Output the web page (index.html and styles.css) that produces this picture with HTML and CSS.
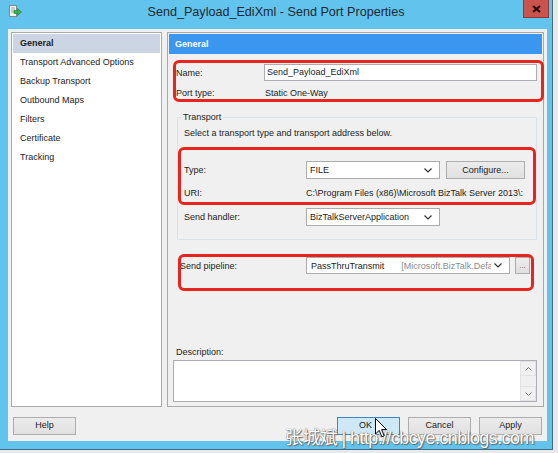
FILE: index.html
```html
<!DOCTYPE html>
<html>
<head>
<meta charset="utf-8">
<title>Send Port Properties</title>
<link rel="stylesheet" href="styles.css">
</head>
<body>
<div class="window">
  <div class="titlebar">
    <svg class="app-icon" width="14" height="13" viewBox="0 0 14 13">
      <rect x="1.5" y="0.5" width="7" height="11" fill="#f4f4f4" stroke="#7d8a96"/>
      <line x1="3" y1="3" x2="7" y2="3" stroke="#9aa6b2"/>
      <line x1="3" y1="5" x2="7" y2="5" stroke="#9aa6b2"/>
      <line x1="3" y1="7" x2="7" y2="7" stroke="#9aa6b2"/>
      <path d="M6 5.5 H9.5 V3.5 L13.5 7 L9.5 10.5 V8.5 H6 Z" fill="#37b34a" stroke="#1f7d2e" stroke-width="0.6"/>
    </svg>
    <div class="title">Send_Payload_EdiXml - Send Port Properties</div>
    <div class="close">
      <svg width="9" height="8" viewBox="0 0 9 8"><path d="M1 1 L8 7 M8 1 L1 7" stroke="#2a1010" stroke-width="2.2"/></svg>
    </div>
  </div>
  <div class="client">
    <div class="main">
      <ul class="nav">
        <li class="sel">General</li>
        <li>Transport Advanced Options</li>
        <li>Backup Transport</li>
        <li>Outbound Maps</li>
        <li>Filters</li>
        <li>Certificate</li>
        <li>Tracking</li>
      </ul>
      <div class="panel">
        <div class="panel-head">General</div>
        <div class="panel-body">
          <div class="row row-name">
            <span class="lbl">Name:</span>
            <div class="input">Send_Payload_EdiXml</div>
          </div>
          <div class="row row-port">
            <span class="lbl">Port type:</span>
            <span class="val">Static One-Way</span>
          </div>
          <fieldset class="transport">
            <legend>Transport</legend>
            <div class="hint">Select a transport type and transport address below.</div>
            <div class="row r-type">
              <span class="lbl2">Type:</span>
              <div class="combo c-type"><span class="ctext">FILE</span><svg class="chev" width="8" height="5" viewBox="0 0 8 5"><path d="M0.5 0.5 L4 4 L7.5 0.5" fill="none" stroke="#333" stroke-width="1.2"/></svg></div>
              <div class="btn configure">Configure...</div>
            </div>
            <div class="row r-uri">
              <span class="lbl2">URI:</span>
              <span class="uri">C:\Program Files (x86)\Microsoft BizTalk Server 2013\:</span>
            </div>
            <div class="row r-handler">
              <span class="lbl2">Send handler:</span>
              <div class="combo c-type"><span class="ctext">BizTalkServerApplication</span><svg class="chev" width="8" height="5" viewBox="0 0 8 5"><path d="M0.5 0.5 L4 4 L7.5 0.5" fill="none" stroke="#333" stroke-width="1.2"/></svg></div>
            </div>
          </fieldset>
          <div class="row r-pipe">
            <span class="lbl3">Send pipeline:</span>
            <div class="combo c-pipe"><span class="ctext">PassThruTransmit</span><span class="gray">[Microsoft.BizTalk.Defa</span><svg class="chev" width="8" height="5" viewBox="0 0 8 5"><path d="M0.5 0.5 L4 4 L7.5 0.5" fill="none" stroke="#333" stroke-width="1.2"/></svg></div>
            <div class="btn dots">...</div>
          </div>
          <div class="desc-lbl">Description:</div>
          <div class="textarea">
            <div class="vscroll">
              <div class="sbtn"><svg width="7" height="4" viewBox="0 0 7 4"><path d="M0.5 3.5 L3.5 0.5 L6.5 3.5" fill="none" stroke="#777" stroke-width="1"/></svg></div>
              <div class="strack"></div>
              <div class="sbtn"><svg width="7" height="4" viewBox="0 0 7 4"><path d="M0.5 0.5 L3.5 3.5 L6.5 0.5" fill="none" stroke="#777" stroke-width="1"/></svg></div>
            </div>
          </div>
        </div>
      </div>
    </div>
    <div class="buttons">
      <div class="btn bbtn">Help</div>
      <div class="spacer"></div>
      <div class="btn bbtn ok">OK</div>
      <div class="btn bbtn">Cancel</div>
      <div class="btn bbtn">Apply</div>
    </div>
  </div>
  <div class="mark m1"></div>
  <div class="mark m2"></div>
  <div class="mark m3"></div>
  <div class="watermark">张城斌 | http://cbcye.cnblogs.com</div>
  <svg class="cursor" width="13" height="21" viewBox="0 0 13 21">
    <path d="M0.5 0.5 L0.5 16 L4.2 12.4 L6.8 18.8 L9.2 17.8 L6.6 11.6 L11.6 11.6 Z" fill="#fff" stroke="#000" stroke-width="1"/>
  </svg>
</div>
</body>
</html>
```

FILE: styles.css
```css
html, body {
  margin: 0;
  padding: 0;
}
body {
  background: #e9e9e9;
  width: 558px;
  height: 453px;
  overflow: hidden;
  font-family: "Liberation Sans", Arial, sans-serif;
  font-size: 9px;
  color: #1b1b1b;
}
.window {
  position: relative;
  width: 552px;
  height: 449px;
  background: #62c3ec;
  border-right: 1px solid #3f6f88;
  border-bottom: 1px solid #3f6f88;
}
.titlebar {
  height: 29px;
  display: flex;
  align-items: flex-start;
  position: relative;
}
.app-icon {
  margin: 5px 0 0 8px;
}
.title {
  position: absolute;
  left: 0;
  right: 0;
  top: 5px;
  text-align: center;
  font-size: 12.6px;
  color: #1c2a35;
}
.close {
  position: absolute;
  right: 3px;
  top: 0;
  width: 26px;
  height: 18px;
  background: #c9534d;
  border: 1px solid #8a3a36;
  border-top: none;
  box-sizing: border-box;
  display: flex;
  align-items: center;
  justify-content: center;
}
.client {
  margin-left: 8px;
  width: 539px;
  height: 412px;
  background: #f0f0f0;
  box-sizing: border-box;
  padding: 3px 0 0 3px;
}
.main {
  display: flex;
  gap: 5px;
  height: 375px;
}
.nav {
  list-style: none;
  margin: 0;
  padding: 1px;
  width: 151px;
  height: 375px;
  box-sizing: border-box;
  background: #fff;
  border: 1px solid #a9a9a9;
}
.nav li {
  height: 19px;
  line-height: 19px;
  padding-left: 7px;
  color: #1b1b1b;
}
.nav li.sel {
  background: #cbd5e4;
  font-weight: bold;
}
.panel {
  width: 377px;
  height: 375px;
  box-sizing: border-box;
  border: 1px solid #a9a9a9;
  background: #f0f0f0;
}
.panel-head {
  margin: 1px;
  height: 20px;
  line-height: 20px;
  background: #3a96ee;
  color: #fff;
  font-weight: bold;
  padding-left: 6px;
}
.panel-body {
  padding: 9px 0 0 8px;
}
.row {
  display: flex;
  align-items: center;
}
.lbl {
  width: 88px;
}
.row-name {
  height: 17px;
}
.input {
  width: 273px;
  height: 17px;
  box-sizing: border-box;
  border: 1px solid #abadb3;
  background: #fff;
  line-height: 15px;
  padding-left: 2px;
}
.row-port {
  margin-top: 3px;
  height: 17px;
}
.val {
  padding-left: 1px;
}
.transport {
  margin: 10px 0 0 1px;
  width: 360px;
  box-sizing: border-box;
  border: 1px solid #dbe3e8;
  padding: 0 0 13px 6px;
}
.transport legend {
  padding: 0 1px;
  margin-left: -2px;
  line-height: 12px;
}
.hint {
  margin-top: 4px;
  line-height: 12px;
}
.lbl2 {
  width: 122px;
}
.r-type {
  margin-top: 22px;
  height: 18px;
}
.combo {
  position: relative;
  display: flex;
  align-items: center;
  box-sizing: border-box;
  border: 1px solid #acacac;
  background: #fff;
  padding-left: 3px;
  padding-right: 16px;
  overflow: hidden;
  white-space: nowrap;
}
.c-type {
  width: 134px;
  height: 18px;
}
.chev {
  position: absolute;
  right: 7px;
  top: 6px;
}
.btn {
  box-sizing: border-box;
  border: 1px solid #adadad;
  background: linear-gradient(#ececec, #e0e0e0);
  display: flex;
  align-items: center;
  justify-content: center;
  color: #1b1b1b;
}
.configure {
  margin-left: 6px;
  width: 79px;
  height: 18px;
}
.r-uri {
  margin-top: 6px;
  height: 16px;
}
.uri {
  width: 220px;
  white-space: nowrap;
  overflow: hidden;
}
.r-handler {
  margin-top: 7px;
  height: 18px;
}
.r-pipe {
  margin-top: 17px;
  height: 17px;
  margin-left: 4px;
}
.lbl3 {
  width: 126px;
}
.c-pipe {
  width: 204px;
  height: 17px;
  padding-left: 4px;
  padding-right: 18px;
}
.c-pipe .chev {
  top: 5px;
}
.gray {
  color: #8c8c8c;
  margin-left: 17px;
  white-space: nowrap;
  overflow: hidden;
}
.dots {
  margin-left: 5px;
  width: 15px;
  height: 17px;
  color: #666;
  align-items: flex-end;
  padding-bottom: 3px;
  font-size: 8px;
  line-height: 8px;
}
.desc-lbl {
  margin-top: 72px;
  line-height: 12px;
}
.textarea {
  margin: 2px 0 0 -3px;
  width: 364px;
  height: 42px;
  box-sizing: border-box;
  border: 1px solid #abadb3;
  background: #fff;
  display: flex;
  justify-content: flex-end;
}
.vscroll {
  width: 16px;
  display: flex;
  flex-direction: column;
  background: #f0f0f0;
}
.sbtn {
  height: 15px;
  display: flex;
  align-items: center;
  justify-content: center;
  background: #f0f0f0;
  border: 1px solid #e3e3e3;
  box-sizing: border-box;
}
.strack {
  flex: 1;
  border-left: 1px solid #e3e3e3;
}
.buttons {
  display: flex;
  margin-top: 10px;
  padding: 0 5px 0 2px;
  gap: 8px;
}
.spacer {
  flex: 1;
}
.bbtn {
  width: 63px;
  height: 18px;
  padding-bottom: 3px;
}
.ok {
  background: #cde8f7;
  border-color: #3d86c0;
  padding-right: 6px;
}
.mark {
  position: absolute;
  box-sizing: border-box;
  border: 3px solid #e6261e;
  border-radius: 6px;
}
.m1 {
  left: 173px;
  top: 60px;
  width: 371px;
  height: 42px;
}
.m2 {
  left: 178px;
  top: 147px;
  width: 358px;
  height: 58px;
}
.m3 {
  left: 178px;
  top: 254px;
  width: 356px;
  height: 37px;
}
.watermark {
  position: absolute;
  left: 285px;
  top: 427px;
  font-family: "Liberation Sans", "Noto Sans CJK SC", sans-serif;
  font-size: 18px;
  line-height: 22px;
  letter-spacing: -0.6px;
  color: #fff;
  white-space: nowrap;
  text-shadow: 0 0 1px #4a4a4a, 1px 1px 1px #6a6a6a;
}
.cursor {
  position: absolute;
  left: 375px;
  top: 418px;
}
```
